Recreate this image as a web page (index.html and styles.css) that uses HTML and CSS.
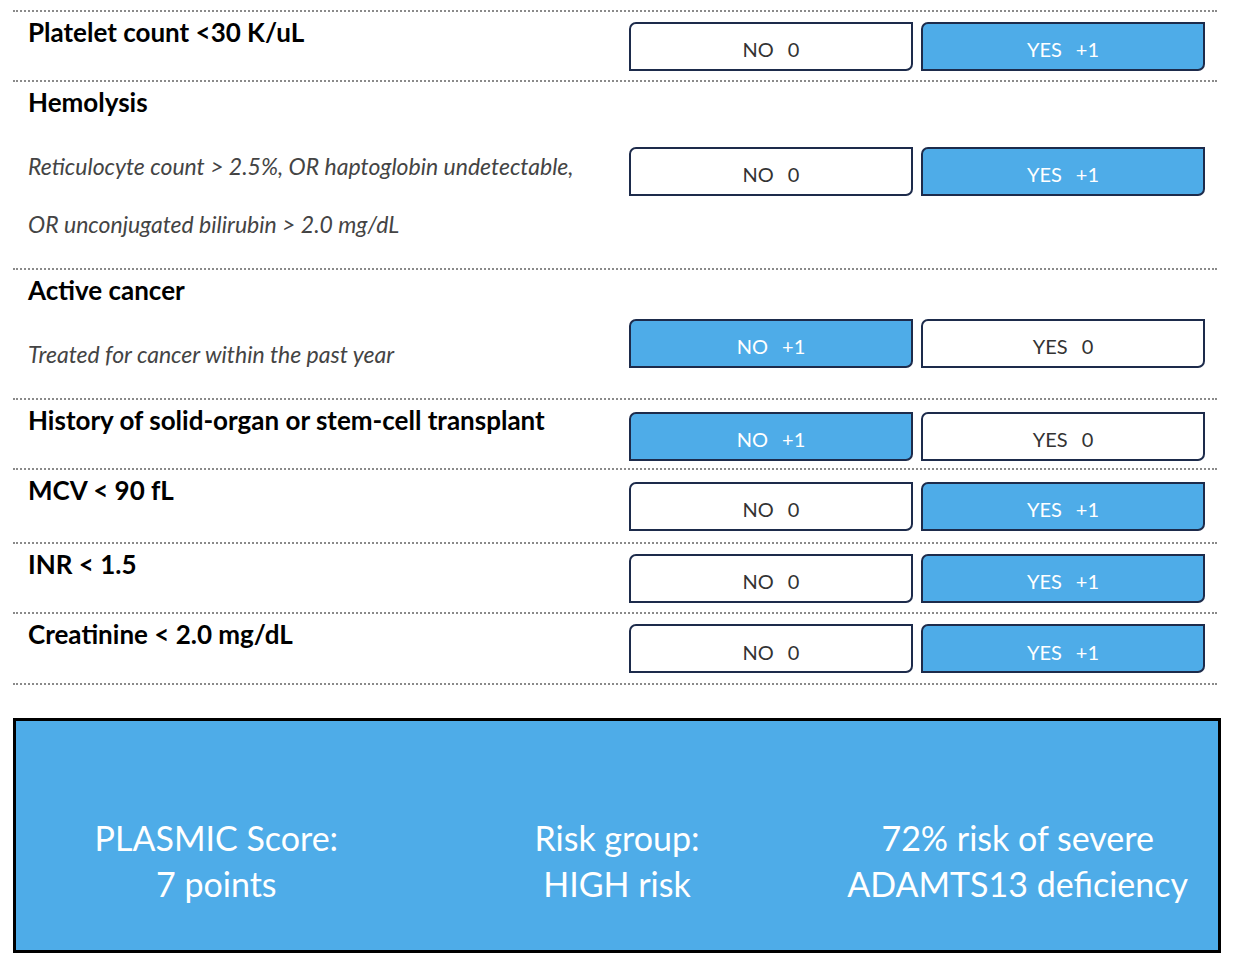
FILE: index.html
```html
<html>
<head>
<title>PLASMIC score</title>
<link rel="stylesheet" href="styles.css">
</head>
<body>
<div class="sheet">

<div class="item">
  <div class="item-text">
    <div class="item-title">Platelet count &lt;30 K/uL</div>
  </div>
  <div class="choices">
    <div class="choice"><span>NO</span><span>0</span></div>
    <div class="choice choice-on"><span>YES</span><span>+1</span></div>
  </div>
</div>

<div class="item">
  <div class="item-text">
    <div class="item-title">Hemolysis</div>
    <div class="item-note">Reticulocyte count &gt; 2.5%, OR haptoglobin undetectable,<br>OR unconjugated bilirubin &gt; 2.0 mg/dL</div>
  </div>
  <div class="choices choices-high">
    <div class="choice"><span>NO</span><span>0</span></div>
    <div class="choice choice-on"><span>YES</span><span>+1</span></div>
  </div>
</div>

<div class="item">
  <div class="item-text">
    <div class="item-title">Active cancer</div>
    <div class="item-note">Treated for cancer within the past year</div>
  </div>
  <div class="choices choices-low">
    <div class="choice choice-on"><span>NO</span><span>+1</span></div>
    <div class="choice"><span>YES</span><span>0</span></div>
  </div>
</div>

<div class="item">
  <div class="item-text">
    <div class="item-title">History of solid-organ or stem-cell transplant</div>
  </div>
  <div class="choices choices-down">
    <div class="choice choice-on"><span>NO</span><span>+1</span></div>
    <div class="choice"><span>YES</span><span>0</span></div>
  </div>
</div>

<div class="item item-tall">
  <div class="item-text">
    <div class="item-title">MCV &lt; 90 fL</div>
  </div>
  <div class="choices">
    <div class="choice"><span>NO</span><span>0</span></div>
    <div class="choice choice-on"><span>YES</span><span>+1</span></div>
  </div>
</div>

<div class="item">
  <div class="item-text">
    <div class="item-title">INR &lt; 1.5</div>
  </div>
  <div class="choices">
    <div class="choice"><span>NO</span><span>0</span></div>
    <div class="choice choice-on"><span>YES</span><span>+1</span></div>
  </div>
</div>

<div class="item item-last">
  <div class="item-text">
    <div class="item-title">Creatinine &lt; 2.0 mg/dL</div>
  </div>
  <div class="choices">
    <div class="choice"><span>NO</span><span>0</span></div>
    <div class="choice choice-on"><span>YES</span><span>+1</span></div>
  </div>
</div>

</div>

<div class="result">
  <div class="result-cell">PLASMIC Score:<br>7 points</div>
  <div class="result-cell">Risk group:<br>HIGH risk</div>
  <div class="result-cell">72% risk of severe<br>ADAMTS13 deficiency</div>
</div>
</body>
</html>
```

FILE: styles.css
```css
body { margin:0; background:#FFF; color:#000; font-family:Lato, "Open Sans", sans-serif; }

.sheet { margin:10px 16px 0 13px; }

.item { display:grid; grid-template-columns:1fr 576px; padding-right:12px; min-height:68px;
  border-top:2px dotted #8a8a8a; }
.item-tall { min-height:72px; }
.item-last { border-bottom:2px dotted #8a8a8a; min-height:69px; }

.item-text { padding:5px 0 15px 15px; }
.item-title { font-size:26px; font-weight:bold; line-height:30px; }
.item-note { margin-top:20px; font-size:23px; font-style:italic; line-height:58px; color:#444; }

.choices { display:flex; gap:8px; align-self:center; }
.choices-high { margin-bottom:8px; }
.choices-low { margin-top:18px; }
.choices-down { margin-top:4px; }

.choice { box-sizing:border-box; flex:1; height:49px; padding-top:6px; display:flex; justify-content:center; align-items:center; gap:14px;
  border:2px solid #1d2b4b; border-radius:7px 0 7px 0; background:#FFF; color:#333; font-size:20px; }
.choice-on { background:#4eace8; color:#FFF; }

.result { display:grid; grid-template-columns:1fr 1fr 1fr; align-items:end; margin:33px 12px 0 13px; height:229px;
  border:3px solid #000; background:#4eace8; color:#FFF; }
.result-cell { padding-bottom:43px; text-align:center; font-size:34px; line-height:46px; }
```
